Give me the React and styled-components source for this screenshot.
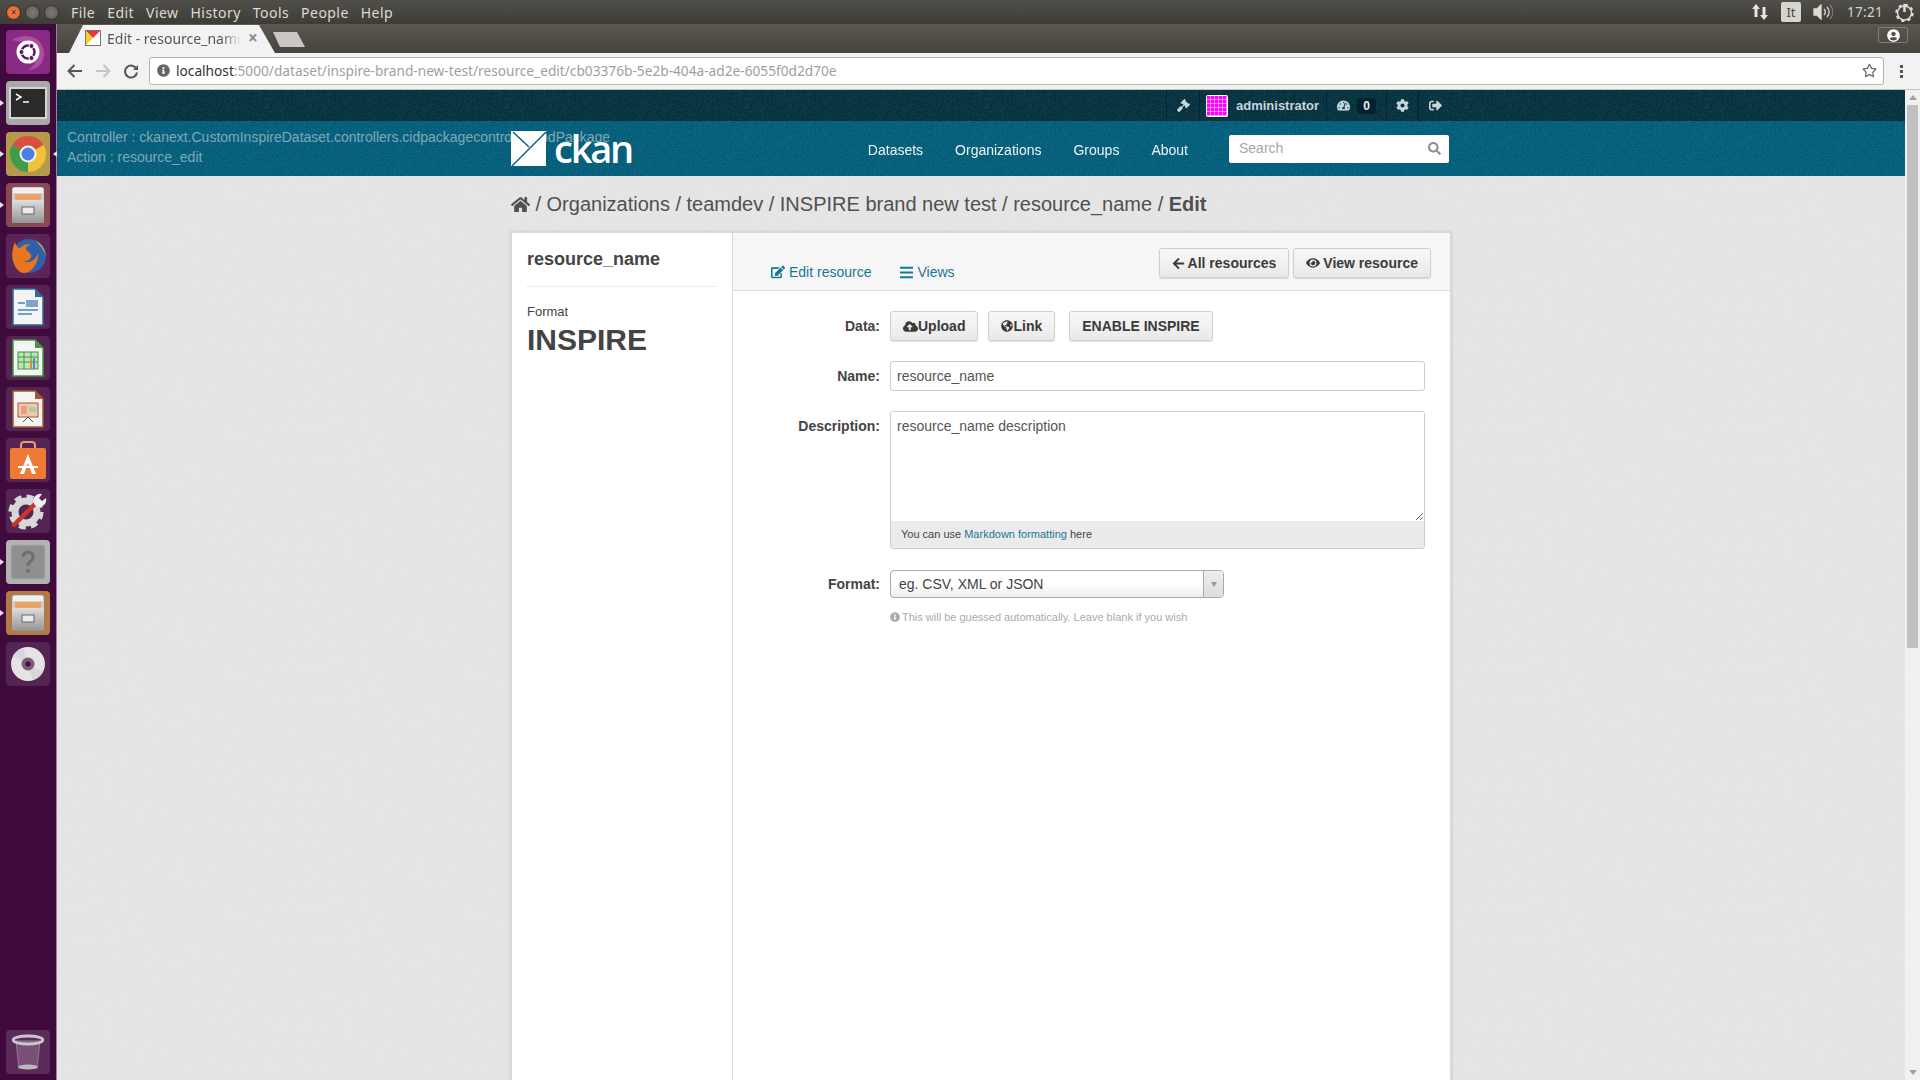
import React from "react";
import styled, { createGlobalStyle } from "styled-components";
import {
  FaHome,
  FaGavel,
  FaTachometerAlt,
  FaCog,
  FaSignOutAlt,
  FaCloudUploadAlt,
  FaGlobeAmericas,
  FaArrowLeft,
  FaEye,
  FaEdit,
  FaBars,
  FaInfoCircle,
  FaSearch,
  FaUserCircle,
  FaRegStar,
} from "react-icons/fa";

// the ckan bg texture, faint speckle
const noise = `url("data:image/svg+xml,%3Csvg xmlns='http://www.w3.org/2000/svg' width='240' height='240'%3E%3Cfilter id='n'%3E%3CfeTurbulence type='fractalNoise' baseFrequency='1.3' numOctaves='1'/%3E%3CfeColorMatrix values='0 0 0 0 1 0 0 0 0 1 0 0 0 0 1 0 0 0 .22 -.08'/%3E%3C/filter%3E%3Crect width='240' height='240' filter='url(%23n)'/%3E%3C/svg%3E")`;

const GlobalStyle = createGlobalStyle`
  html, body {
    margin: 0;
    padding: 0;
    height: 1080px;
    overflow: hidden;
    font-family: "Liberation Sans", Arial, sans-serif;
    background: #e6e6e6;
  }
  * { box-sizing: border-box; }
`;

const Screen = styled.div`
  width: 1920px;
  height: 1080px;
  display: flex;
  flex-direction: column;
  overflow: hidden;
`;

/* ubuntu top panel */
const Panel = styled.div`
  height: 24px;
  flex: none;
  display: flex;
  align-items: center;
  padding: 0 6px 0 6px;
  background: linear-gradient(#514f49, #3d3c37);
  color: #dfdbd2;
  font-family: "Noto Sans", sans-serif;
  font-size: 14px;
`;

const WinButtons = styled.div`
  display: flex;
  gap: 4px;
  margin-right: 12px;
`;

const WinButton = styled.span`
  width: 15px;
  height: 15px;
  border-radius: 50%;
  background: ${(p) => (p.$close ? "radial-gradient(#f5824f, #e25a1c)" : "radial-gradient(#7c7a73, #5d5b55)")};
  border: 1px solid #35342f;
  color: #3b2a20;
  font-size: 10px;
  line-height: 12px;
  text-align: center;
`;

const Menu = styled.div`
  display: flex;
  gap: 12px;
  letter-spacing: 0.45px;
`;

const Indicators = styled.div`
  margin-left: auto;
  display: flex;
  align-items: center;
  gap: 12px;
`;

const LangTile = styled.span`
  width: 20px;
  height: 20px;
  border-radius: 2px;
  background: #d7d4cc;
  color: #4a4842;
  font-size: 13px;
  line-height: 20px;
  text-align: center;
`;

const Clock = styled.span`
  margin: 0 0 0 2px;
  font-size: 13.5px;
  letter-spacing: 0.3px;
  color: #d8d4ca;
`;

const Desktop = styled.div`
  flex: 1;
  display: flex;
  min-height: 0;
`;

/* launcher */
const Launcher = styled.div`
  width: 57px;
  flex: none;
  display: flex;
  flex-direction: column;
  align-items: center;
  gap: 7px;
  padding: 6px 0;
  background: #3f0a3c;
  border-right: 1px solid #a878a6;
`;

const Tile = styled.div`
  position: relative;
  width: 44px;
  height: 44px;
  flex: none;
  border-radius: 4px;
  background: ${(p) => p.$bg || "#562452"};
  margin-top: ${(p) => (p.$bottom ? "auto" : "0")};
  display: flex;
  align-items: center;
  justify-content: center;

  &::before {
    content: ${(p) => (p.$pip ? '""' : "none")};
    position: absolute;
    left: -6px;
    top: 19px;
    border: 3px solid transparent;
    border-left: 4px solid #e8e2e8;
  }
  &::after {
    content: ${(p) => (p.$active ? '""' : "none")};
    position: absolute;
    right: -7px;
    top: 19px;
    border: 3px solid transparent;
    border-right: 4px solid #e8e2e8;
  }
`;

const Browser = styled.div`
  flex: 1;
  min-width: 0;
  display: flex;
  flex-direction: column;
`;

const TabStrip = styled.div`
  height: 29px;
  flex: none;
  display: flex;
  align-items: flex-end;
  padding: 0 12px 0 12px;
  background: linear-gradient(#5b5850, #45433d);
`;

const Tab = styled.div`
  width: 206px;
  height: 28px;
  display: flex;
  align-items: center;
  padding: 0 14px 2px 16px;
  background: #f2f2f2;
  clip-path: polygon(0 100%, 14px 0, 190px 0, 100% 100%);
  font-family: "Noto Sans", sans-serif;
  font-size: 14px;
  color: #555;
`;

const TabTitle = styled.span`
  margin-left: 6px;
  width: 134px;
  overflow: hidden;
  white-space: nowrap;
  -webkit-mask-image: linear-gradient(90deg, #000 85%, transparent);
  mask-image: linear-gradient(90deg, #000 85%, transparent);
`;

const TabClose = styled.span`
  margin-left: 7px;
  color: #8a8a8a;
  font-size: 17px;
  line-height: 20px;
  font-weight: 700;
`;

const NewTab = styled.div`
  width: 32px;
  height: 15px;
  margin: 0 0 6px -2px;
  background: #c9c8c5;
  clip-path: polygon(0 0, 24px 0, 100% 100%, 7px 100%);
`;

const ProfileBox = styled.div`
  margin: 0 0 10px auto;
  width: 30px;
  height: 16px;
  border: 1px solid #807d75;
  border-radius: 2px;
  display: flex;
  align-items: center;
  justify-content: center;
  color: #fff;
  font-size: 13px;
`;

const Toolbar = styled.div`
  height: 37px;
  flex: none;
  display: flex;
  align-items: center;
  padding: 0 10px 0 4px;
  background: #f2f2f2;
  border-bottom: 1px solid #c4c4c4;
`;

const NavGlyph = styled.span`
  width: 28px;
  display: flex;
  justify-content: center;
  color: ${(p) => (p.$off ? "#c4c4c4" : "#555")};
`;

const Omnibox = styled.div`
  flex: 1;
  height: 28px;
  margin: -1px 8px 0 4px;
  display: flex;
  align-items: center;
  padding: 0 6px 0 7px;
  background: #fff;
  border: 1px solid #b4b4b4;
  border-radius: 3px;
  font-family: "Noto Sans", sans-serif;
  font-size: 13.7px;
  color: #a0a0a0;
  white-space: nowrap;
`;

const UrlHost = styled.span`
  margin-left: 6px;
  color: #333;
`;

const StarGlyph = styled.span`
  margin-left: auto;
  display: flex;
  color: #6a6a6a;
  font-size: 15px;
`;

const Dots = styled.div`
  width: 18px;
  display: flex;
  flex-direction: column;
  align-items: center;
  gap: 2px;
  & > i {
    width: 3px;
    height: 3px;
    background: #555;
  }
`;

const Viewport = styled.div`
  flex: 1;
  min-height: 0;
  display: flex;
`;

const Page = styled.div`
  flex: 1;
  min-width: 0;
  display: flex;
  flex-direction: column;
  overflow: hidden;
  background: #e4e4e4 ${noise};
`;

const Scrollbar = styled.div`
  width: 15px;
  flex: none;
  display: flex;
  flex-direction: column;
  align-items: center;
  background: #f1f1f1;
`;

const ScrollArrow = styled.span`
  width: 0;
  height: 0;
  margin: 5px 0;
  border: 4px solid transparent;
  border-top: 0;
  border-bottom: 5px solid #a3a3a3;
  transform: ${(p) => (p.$down ? "rotate(180deg)" : "none")};
  margin-top: ${(p) => (p.$down ? "auto" : "5px")};
`;

const ScrollThumb = styled.div`
  width: 11px;
  height: 543px;
  background: #c1c1c1;
`;

const Container = styled.div`
  width: 940px;
  margin: 0 auto;
  display: flex;
  align-items: center;
`;

/* ckan account bar */
const AccountBar = styled.div`
  height: 31px;
  flex: none;
  background: #032e3d ${noise};
  display: flex;
`;

const AccountItems = styled.div`
  margin: 0 1px 0 auto;
  display: flex;
  height: 31px;
`;

const AccountItem = styled.div`
  display: flex;
  align-items: center;
  gap: ${(p) => p.$gap || 0}px;
  width: ${(p) => p.$w}px;
  padding-left: ${(p) => p.$pl || 0}px;
  justify-content: ${(p) => (p.$pl ? "flex-start" : "center")};
  border-left: 1px solid #032532;
  color: #c6d7db;
  font-size: 13px;
  font-weight: 700;
`;

const AccountLast = styled(AccountItem)`
  justify-content: flex-start;
`;

const Badge = styled.span`
  width: 19px;
  height: 16px;
  border-radius: 3px;
  background: #02222d;
  color: #e4ecee;
  font-size: 12px;
  line-height: 16px;
  text-align: center;
`;

/* masthead */
const Masthead = styled.div`
  position: relative;
  height: 55px;
  flex: none;
  background: #005b78 ${noise};
  display: flex;
`;

const DebugInfo = styled.div`
  position: absolute;
  left: 10px;
  top: 6px;
  color: #7fa9b9;
  font-size: 14px;
  line-height: 20px;
  white-space: nowrap;
`;

const Brand = styled.div`
  position: relative;
  display: flex;
  align-items: center;
  height: 55px;
  margin-right: auto;
`;

const BrandName = styled.span`
  margin: -2px 0 0 8px;
  color: #fff;
  font-family: "Open Sans", sans-serif;
  font-size: 38px;
  font-weight: 600;
  line-height: 40px;
  letter-spacing: -2.2px;
`;

const MainNav = styled.nav`
  display: flex;
  height: 55px;
  align-items: center;
  margin-right: 26px;
`;

const NavLink = styled.a`
  padding: 0 16px;
  margin-top: 3px;
  color: #fff;
  font-size: 14px;
  opacity: 0.93;
`;

const SearchBox = styled.div`
  position: relative;
  width: 220px;
  height: 28px;
  margin: 0 2px 0 -1px;
`;

const SearchInput = styled.input`
  width: 100%;
  height: 28px;
  padding: 0 30px 1px 10px;
  border: 0;
  border-radius: 2px;
  background: #fff;
  font: 14px "Liberation Sans", Arial, sans-serif;
  &::placeholder { color: #a8a8a8; opacity: 1; }
`;

const SearchGlyph = styled.span`
  position: absolute;
  right: 8px;
  top: 7px;
  color: #8f8f8f;
  font-size: 13px;
  display: flex;
`;

/* breadcrumb */
const Crumbs = styled.div`
  height: 54px;
  flex: none;
  gap: 5.5px;
  color: #505050;
  font-size: 20px;
  padding-top: 2px;
  white-space: nowrap;
  & > svg { font-size: 19px; }
  & > b { font-weight: 700; }
`;

const CardWrap = styled.div`
  width: 944px;
  margin: 0 auto;
  flex: 1;
  display: flex;
  padding: 3px 3px 0;
  background: #d9d9d9;
  border-radius: 4px 4px 0 0;
`;

const Card = styled.div`
  flex: 1;
  display: flex;
  background: #fff;
`;

const Aside = styled.aside`
  width: 221px;
  flex: none;
  padding: 16px 15px 0 15px;
  border-right: 1px solid #ddd;
  color: #444;
`;

const AsideTitle = styled.h1`
  margin: 0 0 17px;
  padding-bottom: 16px;
  border-bottom: 1px dotted #ddd;
  font-size: 18px;
  line-height: 21px;
  font-weight: 700;
`;

const AsideLabel = styled.div`
  font-size: 13px;
  line-height: 16px;
`;

const AsideValue = styled.div`
  margin-top: 2px;
  font-size: 30px;
  line-height: 35px;
  font-weight: 700;
`;

const Primary = styled.div`
  flex: 1;
  min-width: 0;
`;

const PrimaryHead = styled.div`
  height: 58px;
  display: flex;
  align-items: flex-start;
  padding: 15px 19px 0 38px;
  background: #f6f6f6;
  border-bottom: 1px solid #ddd;
`;

const PageTab = styled.a`
  display: flex;
  align-items: center;
  gap: ${(p) => p.$gap || 4}px;
  margin: 16px 28px 0 0;
  color: #187794;
  font-size: 14px;
  line-height: 16px;
`;

const Actions = styled.div`
  margin-left: auto;
  display: flex;
  gap: 4px;
`;

const Button = styled.button`
  height: 30px;
  margin-left: ${(p) => p.$ml || 0}px;
  display: inline-flex;
  align-items: center;
  gap: ${(p) => p.$gap ?? 3}px;
  padding: 0 12px;
  border: 1px solid #cfcfcf;
  border-radius: 3px;
  background: linear-gradient(#f8f8f8, #e9e9e9);
  box-shadow: 0 1px 1px rgba(0, 0, 0, 0.12);
  color: #3a3a3a;
  font: 700 14px "Liberation Sans", Arial, sans-serif;
  white-space: nowrap;
`;

const Form = styled.div`
  display: grid;
  grid-template-columns: 147px 535px;
  column-gap: 10px;
  padding-top: 20px;
`;

const Label = styled.div`
  text-align: right;
  font-size: 14px;
  font-weight: 700;
  color: #444;
  line-height: ${(p) => p.$lh || 30}px;
`;

const Field = styled.div`
  margin-bottom: ${(p) => p.$mb ?? 20}px;
  display: flex;
  gap: ${(p) => p.$gap || 0}px;
`;

const TextInput = styled.input`
  width: 100%;
  height: 30px;
  padding: 0 6px;
  border: 1px solid #ccc;
  border-radius: 3px;
  color: #555;
  font: 14px "Liberation Sans", Arial, sans-serif;
`;

const MarkdownBox = styled.div`
  width: 100%;
  height: 138px;
  display: flex;
  flex-direction: column;
  border: 1px solid #ccc;
  border-radius: 3px;
  overflow: hidden;
`;

const TextArea = styled.textarea`
  display: block;
  height: 109px;
  flex: none;
  padding: 4px 6px;
  border: 0;
  outline: 0;
  resize: vertical;
  color: #555;
  font: 14px/20px "Liberation Sans", Arial, sans-serif;
`;

const MarkdownNote = styled.div`
  flex: 1;
  padding-left: 10px;
  background: #ebebeb;
  color: #444;
  font-size: 11px;
  line-height: 27px;
  & > a { color: #187794; }
`;

const FormatSelect = styled.div`
  width: 334px;
  height: 28px;
  display: flex;
  border: 1px solid #aaa;
  border-radius: 4px;
  background: linear-gradient(#fff 50%, #eee);
  color: #444;
  font-size: 14px;
  line-height: 26px;
`;

const FormatValue = styled.span`
  flex: 1;
  padding-left: 8px;
`;

const FormatArrow = styled.span`
  width: 20px;
  display: flex;
  align-items: center;
  justify-content: center;
  border-left: 1px solid #aaa;
  background: linear-gradient(#eee, #ddd);
  border-radius: 0 3px 3px 0;
  &::after {
    content: "";
    border: 3px solid transparent;
    border-top: 5px solid #999;
    margin-top: 4px;
  }
`;

const Hint = styled.div`
  display: flex;
  align-items: center;
  gap: 2px;
  margin-top: -8px;
  color: #aaa;
  font-size: 11px;
  line-height: 14px;
`;

/* drawings for the launcher */
const UbuntuLogo = () => (
  <svg width="40" height="40" viewBox="0 0 40 40">
    <path d="M4 8c14-8 30-4 32 12 1 12-8 18-16 18 14-8 12-26-16-30z" fill="#a9509f" />
    <circle cx="20" cy="20" r="11.500" fill="#fff" />
    <circle cx="20" cy="20" r="6.500" fill="none" stroke="#5e1a5a" strokeWidth="2.500" />
    <circle cx="13.500" cy="20" r="2.500" fill="#5e1a5a" stroke="#fff" />
    <circle cx="23.500" cy="14" r="2.500" fill="#5e1a5a" stroke="#fff" />
    <circle cx="23.500" cy="26" r="2.500" fill="#5e1a5a" stroke="#fff" />
  </svg>
);

const Terminal = () => (
  <svg width="38" height="32" viewBox="0 0 38 32">
    <rect x="1" y="1" width="36" height="30" fill="#2a2a2a" stroke="#d4d4d4" strokeWidth="2" />
    <path d="M7 7l5 3-5 3" fill="none" stroke="#fff" strokeWidth="1.500" />
    <path d="M14 15h6" stroke="#fff" strokeWidth="1.500" />
  </svg>
);

const Chrome = () => (
  <svg width="38" height="38" viewBox="0 0 38 38">
    <path d="M3.400 10A18 18 0 0 1 34.600 10L19 19z" fill="#d9503f" />
    <path d="M34.600 10A18 18 0 0 1 19 37L19 19z" fill="#efc23a" />
    <path d="M19 37A18 18 0 0 1 3.400 10L19 19z" fill="#3f9c4a" />
    <circle cx="19" cy="19" r="8.500" fill="#f4f4f4" />
    <circle cx="19" cy="19" r="6.500" fill="#4a7fe0" />
  </svg>
);

const FileCabinet = () => (
  <svg width="34" height="38" viewBox="0 0 34 38">
    <defs>
      <linearGradient id="cab" x1="0" y1="0" x2="0" y2="1">
        <stop offset="0" stopColor="#dedede" />
        <stop offset="1" stopColor="#949494" />
      </linearGradient>
    </defs>
    <rect x="1" y="1" width="32" height="36" rx="3" fill="#d0d0d0" />
    <rect x="2" y="2" width="30" height="5" fill="#f0f0f0" />
    <rect x="4" y="8" width="26" height="6" fill="#e8a36a" />
    <rect x="1" y="14" width="32" height="23" rx="2" fill="url(#cab)" />
    <rect x="11" y="21" width="12" height="7" fill="#ececec" stroke="#666" />
  </svg>
);

const Firefox = () => (
  <svg width="40" height="40" viewBox="0 0 40 40">
    <circle cx="21" cy="20" r="17" fill="#2f5fa8" />
    <path d="M7 6c1 4 3 6 5 6 3-3 7-5 11-3-4 0-6 3-5 5 3 2 6 4 5 7-1 4-6 5-9 4 6 3 14 0 16-8 1 8-5 20-14 20C8 37 0 22 7 6z" fill="#e8761e" />
    <path d="M28 5c6 3 9 9 10 15-2-6-6-11-10-15z" fill="#f2b02e" />
  </svg>
);

const OfficeDoc = ({ color, children }) => (
  <svg width="32" height="38" viewBox="0 0 32 38">
    <path d="M1 1h22l8 8v28H1z" fill="#f4f4f4" stroke={color} strokeWidth="1.500" />
    <path d="M23 1l8 8h-8z" fill={color} />
    {children}
  </svg>
);

const Software = () => (
  <svg width="38" height="40" viewBox="0 0 38 40">
    <path d="M12 10V5a3 3 0 0 1 3-3h8a3 3 0 0 1 3 3v5" fill="none" stroke="#e89a6c" strokeWidth="2" />
    <rect x="1" y="8" width="36" height="31" rx="2" fill="#ee7a35" />
    <path d="M19 14l8 20h-4l-4-11-4 11h-4z" fill="#fff" />
    <rect x="9" y="26" width="20" height="2" fill="#fff" />
  </svg>
);

const Settings = () => (
  <svg width="40" height="40" viewBox="0 0 40 40">
    <circle cx="18" cy="21" r="11" fill="none" stroke="#d8d8d8" strokeWidth="7" />
    <circle cx="18" cy="21" r="15.500" fill="none" stroke="#d8d8d8" strokeWidth="4" strokeDasharray="7 5.200" />
    <path d="M6 34L28 12" stroke="#c8352a" strokeWidth="4.500" strokeLinecap="round" />
    <path d="M26 13a7 7 0 0 1 8-10l-3 4 3 3 4-3a7 7 0 0 1-10 8z" fill="#eee" />
  </svg>
);

const Help = () => (
  <svg width="36" height="36" viewBox="0 0 36 36">
    <rect x="1" y="1" width="34" height="34" rx="2" fill="#8f8f8f" stroke="#a8a8a8" />
    <path d="M13 13a5 5 0 1 1 8 4c-2 1.500-3 2-3 5" fill="none" stroke="#6f6f6f" strokeWidth="3" />
    <circle cx="18" cy="27" r="2" fill="#6f6f6f" />
  </svg>
);

const Disc = () => (
  <svg width="36" height="36" viewBox="0 0 36 36">
    <circle cx="18" cy="18" r="17" fill="#e4e4e4" />
    <path d="M18 18L3 10a17 17 0 0 1 10-8z" fill="#d3d8e2" />
    <path d="M18 18L33 26a17 17 0 0 1-10 8z" fill="#d6d6d6" />
    <circle cx="18" cy="18" r="6.500" fill="#7d5a7a" />
    <circle cx="18" cy="18" r="2.500" fill="#3f0a3c" />
  </svg>
);

const Trash = () => (
  <svg width="32" height="38" viewBox="0 0 32 38">
    <path d="M4 8l3 27h18l3-27z" fill="#7a4f78" stroke="#96769a" />
    <ellipse cx="16" cy="7" rx="15" ry="4" fill="none" stroke="#c8c8c8" strokeWidth="3" />
    <ellipse cx="16" cy="34" rx="10" ry="2.500" fill="#b9b9b9" />
  </svg>
);

const Logo = () => (
  <svg width="35" height="35" viewBox="0 0 35 35">
    <rect width="35" height="35" fill="#fff" />
    <path d="M1 35L35 1M2 1l16 15" stroke="#005d7a" strokeWidth="1.400" fill="none" />
  </svg>
);

const Identicon = () => (
  <svg width="22" height="22" viewBox="0 0 22 22">
    <rect width="22" height="22" rx="2" fill="#fff" />
    {[1, 5, 9, 13, 17].map((y) =>
      [1, 5, 9, 13, 17].map((x) => <rect key={`${x}-${y}`} x={x} y={y} width="3.500" height="3.500" fill="#f0f" />)
    )}
  </svg>
);

const Favicon = () => (
  <svg width="16" height="16" viewBox="0 0 16 16">
    <rect x=".5" y=".5" width="15" height="15" fill="#fff" stroke="#777" />
    <path d="M1 15V2l7 6z" fill="#f2d21f" />
    <path d="M1 1h14L8 8z" fill="#e53a2b" />
  </svg>
);

const PanelArrows = () => (
  <svg width="18" height="18" viewBox="0 0 18 18" fill="#e8e5de">
    <path d="M5 1l4 5H6.500v8h-3V6H1zM13 17l-4-5h2.500V4h3v8H17z" />
  </svg>
);

const PanelVolume = () => (
  <svg width="20" height="16" viewBox="0 0 20 16" fill="none" stroke="#dfdbd2" strokeWidth="1.300">
    <path d="M1 5h3l4-4v14l-4-4H1z" fill="#dfdbd2" />
    <path d="M11 5a4 4 0 0 1 0 6M14 3a7 7 0 0 1 0 10" />
    <path d="M17 1a10 10 0 0 1 0 14" stroke="#7d7b74" />
  </svg>
);

const PanelPower = () => (
  <svg width="19" height="19" viewBox="0 0 19 19" fill="none" stroke="#dfdbd2">
    <circle cx="9.500" cy="10" r="7" strokeWidth="1.500" />
    <circle cx="9.500" cy="10" r="8" strokeWidth="2.500" strokeDasharray="3 3.300" />
    <path d="M9.500 1v8" strokeWidth="2.500" />
  </svg>
);

const BackArrow = ({ off }) => (
  <svg width="16" height="14" viewBox="0 0 16 14" fill="none" stroke="currentColor" strokeWidth="2" style={off ? { transform: "scaleX(-1)" } : undefined}>
    <path d="M15 7H2M7.500 1L1.500 7l6 6" />
  </svg>
);

const Reload = () => (
  <svg width="15" height="15" viewBox="0 0 15 15" fill="none" stroke="currentColor" strokeWidth="2">
    <path d="M12.500 5a6 6 0 1 0 .5 3.500" />
    <path d="M14 1v5H9z" fill="currentColor" stroke="none" />
  </svg>
);

const menuItems = ["File", "Edit", "View", "History", "Tools", "People", "Help"];
const navLinks = ["Datasets", "Organizations", "Groups", "About"];

export default function App() {
  return (
    <Screen>
      <GlobalStyle />
      <Panel>
        <WinButtons>
          <WinButton $close>×</WinButton>
          <WinButton />
          <WinButton />
        </WinButtons>
        <Menu>
          {menuItems.map((item) => (
            <span key={item}>{item}</span>
          ))}
        </Menu>
        <Indicators>
          <PanelArrows />
          <LangTile>It</LangTile>
          <PanelVolume />
          <Clock>17:21</Clock>
          <PanelPower />
        </Indicators>
      </Panel>

      <Desktop>
        <Launcher>
          <Tile $bg="#8b2a84"><UbuntuLogo /></Tile>
          <Tile $bg="#a9a9a9" $pip><Terminal /></Tile>
          <Tile $bg="#b59a4e" $pip $active><Chrome /></Tile>
          <Tile $bg="#8a4a55" $pip><FileCabinet /></Tile>
          <Tile $bg="#5d2457"><Firefox /></Tile>
          <Tile>
            <OfficeDoc color="#2b6a9b">
              <rect x="14" y="12" width="12" height="7" fill="#7fa6c4" />
              <rect x="6" y="14" width="7" height="2" fill="#6aa3cc" />
              <rect x="6" y="21" width="20" height="2" fill="#6aa3cc" />
              <rect x="6" y="25" width="14" height="2" fill="#6aa3cc" />
            </OfficeDoc>
          </Tile>
          <Tile>
            <OfficeDoc color="#3f9a3a">
              <rect x="6" y="13" width="20" height="17" fill="#bfe3b8" stroke="#3f9a3a" />
              <path d="M6 18h20M6 23h20M12 13v17M19 13v17" stroke="#3f9a3a" />
              <rect x="18" y="22" width="2" height="8" fill="#e8862e" />
              <rect x="21" y="19" width="2" height="11" fill="#4a8fd0" />
            </OfficeDoc>
          </Tile>
          <Tile>
            <OfficeDoc color="#a05a30">
              <rect x="6" y="13" width="20" height="14" fill="#f0c8b0" stroke="#a05a30" />
              <rect x="9" y="16" width="6" height="8" fill="#e8a080" />
              <rect x="17" y="17" width="7" height="5" fill="#a8d0a0" />
              <path d="M11 32l5-5 5 5" fill="none" stroke="#555" />
            </OfficeDoc>
          </Tile>
          <Tile><Software /></Tile>
          <Tile><Settings /></Tile>
          <Tile $bg="#b3b3b3" $pip><Help /></Tile>
          <Tile $bg="#b27a48" $pip><FileCabinet /></Tile>
          <Tile><Disc /></Tile>
          <Tile $bottom $bg="#5d2b5a"><Trash /></Tile>
        </Launcher>

        <Browser>
          <TabStrip>
            <Tab>
              <Favicon />
              <TabTitle>Edit - resource_name</TabTitle>
              <TabClose>×</TabClose>
            </Tab>
            <NewTab />
            <ProfileBox><FaUserCircle /></ProfileBox>
          </TabStrip>

          <Toolbar>
            <NavGlyph><BackArrow /></NavGlyph>
            <NavGlyph $off><BackArrow off /></NavGlyph>
            <NavGlyph><Reload /></NavGlyph>
            <Omnibox>
              <FaInfoCircle color="#666" size={13} />
              <UrlHost>localhost</UrlHost>
              :5000/dataset/inspire-brand-new-test/resource_edit/cb03376b-5e2b-404a-ad2e-6055f0d2d70e
              <StarGlyph><FaRegStar /></StarGlyph>
            </Omnibox>
            <Dots><i /><i /><i /></Dots>
          </Toolbar>

          <Viewport>
            <Page>
              <AccountBar>
                <Container>
                  <AccountItems>
                    <AccountItem $w={33}><FaGavel size={13} /></AccountItem>
                    <AccountItem $w={127} $pl={6} $gap={8}>
                      <Identicon />
                      administrator
                    </AccountItem>
                    <AccountItem $w={60} $gap={7}>
                      <FaTachometerAlt size={13} />
                      <Badge>0</Badge>
                    </AccountItem>
                    <AccountItem $w={32}><FaCog size={13} /></AccountItem>
                    <AccountLast $w={32} $pl={10}><FaSignOutAlt size={13} /></AccountLast>
                  </AccountItems>
                </Container>
              </AccountBar>

              <Masthead>
                <DebugInfo>
                  Controller : ckanext.CustomInspireDataset.controllers.cidpackagecontroller:CidPackage
                  <br />
                  Action : resource_edit
                </DebugInfo>
                <Container>
                  <Brand>
                    <Logo />
                    <BrandName>ckan</BrandName>
                  </Brand>
                  <MainNav>
                    {navLinks.map((link) => (
                      <NavLink key={link}>{link}</NavLink>
                    ))}
                  </MainNav>
                  <SearchBox>
                    <SearchInput placeholder="Search" />
                    <SearchGlyph><FaSearch /></SearchGlyph>
                  </SearchBox>
                </Container>
              </Masthead>

              <Container as={Crumbs}>
                <FaHome />
                <span>/</span>
                <span>Organizations</span>
                <span>/</span>
                <span>teamdev</span>
                <span>/</span>
                <span>INSPIRE brand new test</span>
                <span>/</span>
                <span>resource_name</span>
                <span>/</span>
                <b>Edit</b>
              </Container>

              <CardWrap>
                <Card>
                  <Aside>
                    <AsideTitle>resource_name</AsideTitle>
                    <AsideLabel>Format</AsideLabel>
                    <AsideValue>INSPIRE</AsideValue>
                  </Aside>
                  <Primary>
                    <PrimaryHead>
                      <PageTab><FaEdit size={14} /> Edit resource</PageTab>
                      <PageTab $gap={3}><FaBars size={15} /> Views</PageTab>
                      <Actions>
                        <Button><FaArrowLeft size={13} /> All resources</Button>
                        <Button><FaEye size={14} /> View resource</Button>
                      </Actions>
                    </PrimaryHead>
                    <Form>
                      <Label>Data:</Label>
                      <Field $gap={10}>
                        <Button $gap={0}><FaCloudUploadAlt size={15} />Upload</Button>
                        <Button $gap={0}><FaGlobeAmericas size={12} />Link</Button>
                        <Button $ml={4}>ENABLE INSPIRE</Button>
                      </Field>
                      <Label>Name:</Label>
                      <Field>
                        <TextInput readOnly value="resource_name" />
                      </Field>
                      <Label>Description:</Label>
                      <Field $mb={21}>
                        <MarkdownBox>
                          <TextArea readOnly value="resource_name description" />
                          <MarkdownNote>
                            You can use <a>Markdown formatting</a> here
                          </MarkdownNote>
                        </MarkdownBox>
                      </Field>
                      <Label $lh={28}>Format:</Label>
                      <Field>
                        <FormatSelect>
                          <FormatValue>eg. CSV, XML or JSON</FormatValue>
                          <FormatArrow />
                        </FormatSelect>
                      </Field>
                      <span />
                      <Hint><FaInfoCircle size={10} /> This will be guessed automatically. Leave blank if you wish</Hint>
                    </Form>
                  </Primary>
                </Card>
              </CardWrap>
            </Page>
            <Scrollbar>
              <ScrollArrow />
              <ScrollThumb />
              <ScrollArrow $down />
            </Scrollbar>
          </Viewport>
        </Browser>
      </Desktop>
    </Screen>
  );
}
